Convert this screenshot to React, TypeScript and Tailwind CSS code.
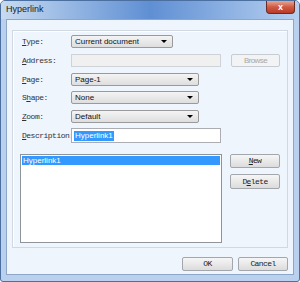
import React from "react";

const mono = { fontFamily: '"Liberation Mono", "DejaVu Sans Mono", monospace' };
const sans = { fontFamily: '"Liberation Sans", Arial, sans-serif' };

function Label({ pre, u, post }: { pre?: string; u: string; post: string }) {
  return (
    <div className="w-[49px] shrink-0 text-[8px] tracking-[-0.5px] text-[#333] whitespace-nowrap overflow-hidden" style={mono}>
      {pre}
      <span className="underline underline-offset-1">{u}</span>
      {post}
    </div>
  );
}

function Combo({ value, width }: { value: string; width: string }) {
  return (
    <div
      className={`${width} h-[13px] flex items-center justify-between rounded-[2px] border border-[#9a9a9a] bg-gradient-to-b from-[#f4f4f4] to-[#dedede] pl-[3px] pr-[5px] text-[8px] text-[#111]`}
      style={sans}
    >
      <span>{value}</span>
      <span className="w-0 h-0 border-l-[3px] border-r-[3px] border-t-[3px] border-l-transparent border-r-transparent border-t-black" />
    </div>
  );
}

function Btn({ children, w, h, disabled }: { children: React.ReactNode; w: string; h: string; disabled?: boolean }) {
  return (
    <div
      className={`${w} ${h} flex items-center justify-center rounded-[2px] border ${
        disabled ? "border-[#c8cbcf] bg-[#f2f3f4] text-[#a8a8a8]" : "border-[#a3a6aa] bg-gradient-to-b from-[#f6f6f6] to-[#dcdcdc] text-[#222]"
      } text-[8px] tracking-[-0.6px]`}
      style={disabled ? sans : mono}
    >
      {children}
    </div>
  );
}

export default function App() {
  return (
    <div className="w-[300px] h-[282px] rounded-t-[5px] rounded-b-[3px] border border-[#4b6f9e] bg-[#b9d1ee] flex flex-col overflow-hidden">
      {/* title bar */}
      <div className="h-[18px] relative flex items-center pl-[5px] bg-gradient-to-r from-[#c7daf0] via-[#5f8fd3] to-[#b7d0f0]">
        <span className="text-[9px] text-[#1a1a1a]" style={sans}>Hyperlink</span>
        <div className="absolute right-[4px] top-0 w-[29px] h-[13px] rounded-b-[4px] border border-t-0 border-[#6b2a22] bg-gradient-to-b from-[#e6a596] via-[#cf5a44] to-[#b83a24] flex items-center justify-center">
          <span className="text-white text-[9px] font-bold leading-none" style={sans}>x</span>
        </div>
      </div>
      {/* client */}
      <div className="flex-1 px-[5px] pb-[6px]">
        <div className="h-full border border-[#8da6c8] bg-[#eef5fd] pl-[5px] pt-[10px] pr-[5px]">
          {/* group box */}
          <div className="w-[276px] h-[218px] border border-[#d0d9e2] shadow-[inset_1px_1px_0_#ffffff] pl-[9px] pt-[4px] flex flex-col">
            <div className="flex items-center h-[13px]">
              <Label u="T" post="ype:" />
              <Combo value="Current document" width="w-[102px]" />
            </div>
            <div className="flex items-center h-[13px] mt-[6px]">
              <Label u="A" post="ddress:" />
              <div className="w-[150px] h-[13px] border border-[#cfd3d8] bg-[#f0f0f0]" />
              <div className="ml-[10px]">
                <Btn w="w-[49px]" h="h-[13px]" disabled>Browse</Btn>
              </div>
            </div>
            <div className="flex items-center h-[13px] mt-[6px]">
              <Label u="P" post="age:" />
              <Combo value="Page-1" width="w-[128px]" />
            </div>
            <div className="flex items-center h-[13px] mt-[5px]">
              <Label pre="S" u="h" post="ape:" />
              <Combo value="None" width="w-[128px]" />
            </div>
            <div className="flex items-center h-[13px] mt-[6px]">
              <Label u="Z" post="oom:" />
              <Combo value="Default" width="w-[128px]" />
            </div>
            <div className="flex items-center h-[15px] mt-[5px]">
              <Label u="D" post="escription:" />
              <div className="w-[150px] h-[15px] border border-[#abadb3] bg-white flex items-center pl-[2px]">
                <span className="bg-[#3399ff] text-white text-[8px] leading-[10px] px-[1px]" style={sans}>Hyperlink1</span>
              </div>
            </div>
            <div className="flex mt-[11px] -ml-[2px]">
              <div className="w-[202px] h-[89px] border border-[#8e949c] bg-white p-[1px]">
                <div className="h-[9px] bg-[#3399ff] text-white text-[8px] leading-[9px] pl-[1px]" style={sans}>Hyperlink1</div>
              </div>
              <div className="ml-[8px] flex flex-col gap-[6px]">
                <Btn w="w-[50px]" h="h-[14px]">
                  <span className="underline underline-offset-1">N</span>ew
                </Btn>
                <Btn w="w-[50px]" h="h-[15px]">
                  D<span className="underline underline-offset-1">e</span>lete
                </Btn>
              </div>
            </div>
          </div>
          <div className="flex justify-end gap-[5px] mt-[9px] w-[276px]">
            <Btn w="w-[51px]" h="h-[14px]">OK</Btn>
            <Btn w="w-[50px]" h="h-[14px]">Cancel</Btn>
          </div>
        </div>
      </div>
    </div>
  );
}
